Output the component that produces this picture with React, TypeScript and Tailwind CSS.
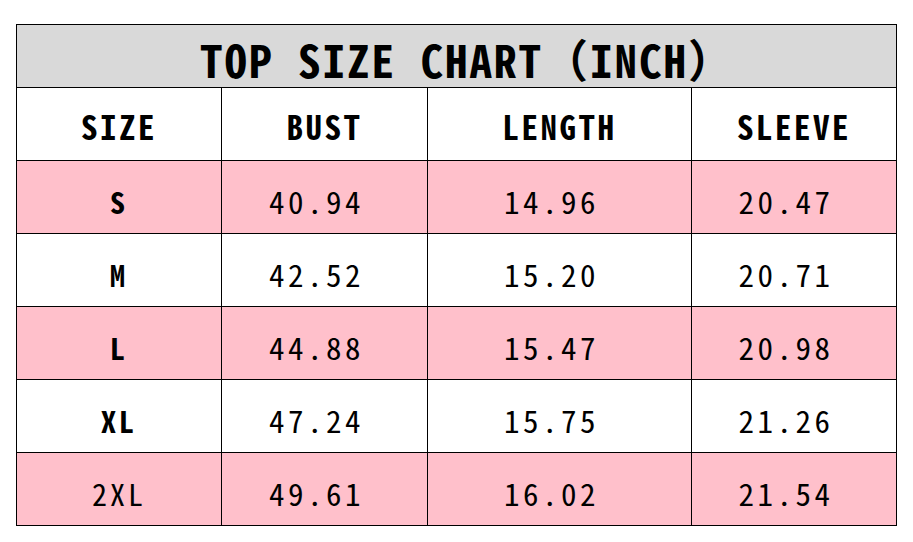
import React from 'react';

const rows = [
    { size: 'S', bust: '40.94', length: '14.96', sleeve: '20.47', pink: true },
    { size: 'M', bust: '42.52', length: '15.20', sleeve: '20.71', pink: false },
    { size: 'L', bust: '44.88', length: '15.47', sleeve: '20.98', pink: true },
    { size: 'XL', bust: '47.24', length: '15.75', sleeve: '21.26', pink: false },
    { size: '2XL', bust: '49.61', length: '16.02', sleeve: '21.54', pink: true },
];

const widths = ['w-[205px]', 'w-[206px]', 'w-[264px]', 'w-[205px]'];
const font = "font-['Noto_Sans_Mono_CJK_SC','Noto_Sans_CJK_SC','Liberation_Mono',monospace]";

const App = () => {
    return (
        <div className={`min-h-screen bg-white pt-[24px] pl-[16px] text-black ${font}`}>
            <div className="w-[881px] border-l border-t border-black">
                {/* title */}
                <div className="flex h-[63px] items-center justify-center border-r border-b border-black bg-[#d9d9d9] pt-[6px] pl-[22px] text-[45px] font-bold tracking-[2px]">
                    TOP SIZE CHART（INCH）
                </div>

                {/* header */}
                <div className="flex h-[73px]">
                    {['SIZE', 'BUST', 'LENGTH', 'SLEEVE'].map((h, i) => (
                        <div
                            key={h}
                            className={`${widths[i]} flex items-center justify-center border-r border-b border-black pt-[5px] text-[33px] font-bold tracking-[2.5px]`}
                        >
                            {h}
                        </div>
                    ))}
                </div>

                {rows.map(r => (
                    <div key={r.size} className={`flex h-[73px] ${r.pink ? 'bg-[#ffc0cb]' : 'bg-white'}`}>
                        {[r.size, r.bust, r.length, r.sleeve].map((v, i) => (
                            <div
                                key={i}
                                className={`${widths[i]} flex items-center justify-center border-r border-b border-black pt-[9px] ${i === 0 ? 'text-[30px] tracking-[3px]' : 'pr-[16px] text-[31px] tracking-[3.5px]'} ${i === 0 && r.size !== '2XL' ? 'font-bold' : 'font-normal'}`}
                            >
                                {v}
                            </div>
                        ))}
                    </div>
                ))}
            </div>
        </div>
    );
};

export default App;
